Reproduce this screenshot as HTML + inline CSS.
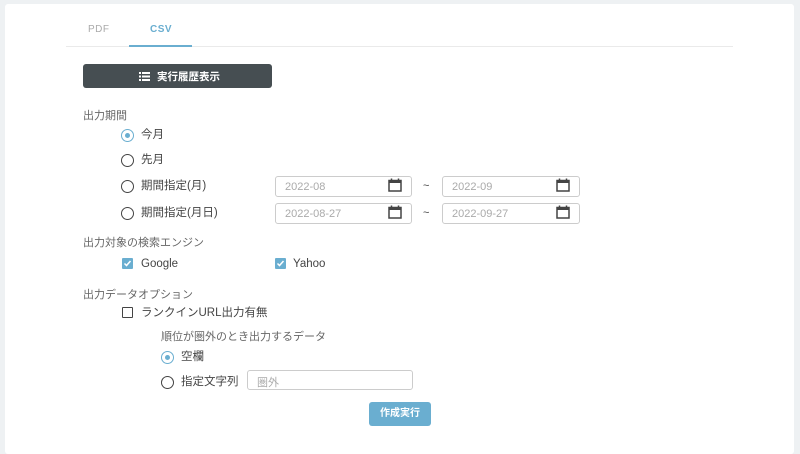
<!DOCTYPE html>
<html><head><meta charset="utf-8"><style>
*{margin:0;padding:0;box-sizing:border-box}
body{width:800px;height:444px;background:#eef1f3;font-family:"Liberation Sans","Noto Sans CJK JP",sans-serif;position:relative;overflow:hidden;color:#444}
.card{position:absolute;left:5px;top:4px;width:789px;height:450px;background:#fff;border-radius:3px}
.a{position:absolute;white-space:nowrap}
.t{font-size:11.5px;line-height:14px}
.lab{font-size:11px;color:#666}
.radio{position:absolute;width:13px;height:13px;border:1.5px solid #444;border-radius:50%}
.radio.on{border-color:#6aaed0}
.radio.on::after{content:"";position:absolute;left:2.5px;top:2.5px;width:5px;height:5px;border-radius:50%;background:#6aaed0}
.cb{position:absolute;width:11px;height:11px;border:1.5px solid #444;border-radius:1px}
.cb.on{background:#6aaed0;border-color:#6aaed0}
.inp{position:absolute;height:21px;border:1px solid #ccc;border-radius:3px;font-size:11px;color:#aaa;padding:4px 0 0 9px}
</style></head><body>
<div class="card"></div>
<div class="a" style="left:88px;top:24px;font-size:10px;color:#aaa;letter-spacing:.5px">PDF</div>
<div class="a" style="left:150px;top:24px;font-size:10px;color:#6aaed0;font-weight:bold;letter-spacing:.5px">CSV</div>
<div class="a" style="left:66px;top:46px;width:667px;height:1px;background:#eaeaea"></div>
<div class="a" style="left:129px;top:45px;width:63px;height:2px;background:#6aaed0"></div>
<div class="a" style="left:83px;top:64px;width:189px;height:24px;background:#464e52;border-radius:3px"></div>
<svg class="a" style="left:139px;top:72px" width="11" height="9"><rect x="0" y="0" width="2" height="2" fill="#fff"/><rect x="3" y="0" width="8" height="2" fill="#fff"/><rect x="0" y="3.5" width="2" height="2" fill="#fff"/><rect x="3" y="3.5" width="8" height="2" fill="#fff"/><rect x="0" y="7" width="2" height="2" fill="#fff"/><rect x="3" y="7" width="8" height="2" fill="#fff"/></svg>
<div class="a" style="left:157px;top:69px;font-size:10.5px;color:#fff;font-weight:bold">実行履歴表示</div>

<div class="a lab" style="left:83px;top:107px">出力期間</div>
<div class="radio on" style="left:121px;top:129px"></div><div class="a t" style="left:141px;top:128px">今月</div>
<div class="radio" style="left:121px;top:154px"></div><div class="a t" style="left:141px;top:153px">先月</div>
<div class="radio" style="left:121px;top:180px"></div><div class="a t" style="left:141px;top:179px">期間指定(月)</div>
<div class="radio" style="left:121px;top:207px"></div><div class="a t" style="left:141px;top:206px">期間指定(月日)</div>

<div class="inp" style="left:275px;top:176px;width:137px">2022-08</div>
<div class="inp" style="left:442px;top:176px;width:138px">2022-09</div>
<div class="inp" style="left:275px;top:203px;width:137px">2022-08-27</div>
<div class="inp" style="left:442px;top:203px;width:138px">2022-09-27</div>
<div class="a" style="left:423px;top:180px;font-size:11px">~</div>
<div class="a" style="left:423px;top:207px;font-size:11px">~</div>
<svg class="a" style="left:388px;top:178px" width="14" height="14"><rect x="1" y="2.5" width="12" height="10.5" fill="none" stroke="#444" stroke-width="1.5"/><rect x="1" y="2.5" width="12" height="2.5" fill="#444"/><path d="M3.5 0.5V3M10.5 0.5V3" stroke="#444" stroke-width="1.5"/></svg>
<svg class="a" style="left:556px;top:178px" width="14" height="14"><rect x="1" y="2.5" width="12" height="10.5" fill="none" stroke="#444" stroke-width="1.5"/><rect x="1" y="2.5" width="12" height="2.5" fill="#444"/><path d="M3.5 0.5V3M10.5 0.5V3" stroke="#444" stroke-width="1.5"/></svg>
<svg class="a" style="left:388px;top:205px" width="14" height="14"><rect x="1" y="2.5" width="12" height="10.5" fill="none" stroke="#444" stroke-width="1.5"/><rect x="1" y="2.5" width="12" height="2.5" fill="#444"/><path d="M3.5 0.5V3M10.5 0.5V3" stroke="#444" stroke-width="1.5"/></svg>
<svg class="a" style="left:556px;top:205px" width="14" height="14"><rect x="1" y="2.5" width="12" height="10.5" fill="none" stroke="#444" stroke-width="1.5"/><rect x="1" y="2.5" width="12" height="2.5" fill="#444"/><path d="M3.5 0.5V3M10.5 0.5V3" stroke="#444" stroke-width="1.5"/></svg>

<div class="a lab" style="left:83px;top:234px">出力対象の検索エンジン</div>
<div class="cb on" style="left:122px;top:258px"></div>
<svg class="a" style="left:122px;top:258px" width="11" height="11"><path d="M2.5 5.5L4.5 7.5L8.5 3" stroke="#fff" stroke-width="1.5" fill="none"/></svg>
<div class="a t" style="left:141px;top:257px">Google</div>
<div class="cb on" style="left:275px;top:258px"></div>
<svg class="a" style="left:275px;top:258px" width="11" height="11"><path d="M2.5 5.5L4.5 7.5L8.5 3" stroke="#fff" stroke-width="1.5" fill="none"/></svg>
<div class="a t" style="left:293px;top:257px">Yahoo</div>

<div class="a lab" style="left:83px;top:286px">出力データオプション</div>
<div class="cb" style="left:122px;top:307px"></div>
<div class="a t" style="left:141px;top:306px">ランクインURL出力有無</div>
<div class="a lab" style="left:161px;top:328px">順位が圏外のとき出力するデータ</div>
<div class="radio on" style="left:161px;top:351px"></div><div class="a t" style="left:181px;top:350px">空欄</div>
<div class="radio" style="left:161px;top:376px"></div><div class="a t" style="left:181px;top:375px">指定文字列</div>
<div class="inp" style="left:247px;top:370px;width:166px;height:20px;padding-top:3px">圏外</div>
<div class="a" style="left:369px;top:402px;width:62px;height:24px;background:#6aaed0;border-radius:3px;color:#fff;font-size:10px;font-weight:bold;text-align:center;line-height:24px">作成実行</div>
</body></html>
